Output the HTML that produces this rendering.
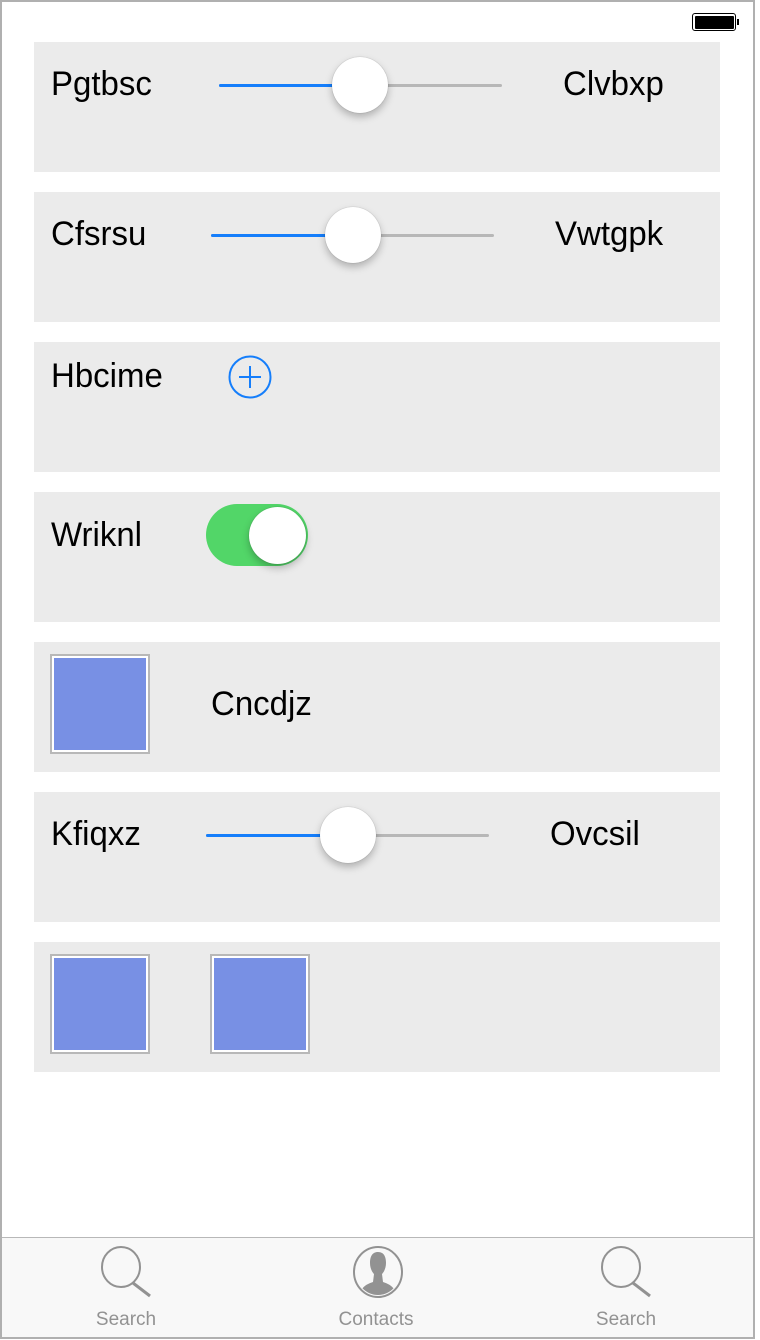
<!DOCTYPE html>
<html><head><meta charset="utf-8"><style>
*{margin:0;padding:0;box-sizing:border-box}
html,body{width:760px;height:1340px;overflow:hidden;background:#fff;font-family:"Liberation Sans",sans-serif}
#frame{position:absolute;left:0;top:0;width:755px;height:1339px;border:2px solid #b0b0b0;background:#fff}
.row{position:absolute;left:34px;width:686px;height:130px;background:#ebebeb}
.t{position:absolute;font-size:34px;color:#000;line-height:36px;transform:scaleX(0.97);transform-origin:left}
.track{position:absolute;height:3px;border-radius:2px;background:#b7b7b7}
.fill{position:absolute;height:3px;border-radius:2px;background:#157efb}
.thumb{position:absolute;width:56px;height:56px;border-radius:50%;background:#fff;box-shadow:0 4px 8px rgba(0,0,0,.25),0 0 1px rgba(0,0,0,.3)}
.img{position:absolute;width:100px;height:100px;border:2px solid #b8b8b8;background:#fff;padding:2px}
.img div{width:100%;height:100%;background:#7890e4}
#tab{position:absolute;left:2px;top:1237px;width:751px;height:100px;background:#f8f8f8;border-top:1px solid #b8b8b8}
.lbl{position:absolute;top:1309px;font-size:19px;color:#929292;width:120px;text-align:center}
</style></head><body>
<div id="frame"></div>
<div style="position:absolute;left:692px;top:13px;width:44px;height:18px;border:1.5px solid #000;border-radius:3px;padding:1.5px"><div style="width:100%;height:100%;background:#000;border-radius:1px"></div></div>
<div style="position:absolute;left:737px;top:19px;width:2px;height:6px;background:#000"></div>

<div class="row" style="top:42px"></div>
<div class="t" style="left:51px;top:66px">Pgtbsc</div>
<div class="track" style="left:219px;width:283px;top:84px"></div>
<div class="fill" style="left:219px;width:141px;top:84px"></div>
<div class="thumb" style="left:332px;top:57px"></div>
<div class="t" style="left:563px;top:66px">Clvbxp</div>

<div class="row" style="top:192px"></div>
<div class="t" style="left:51px;top:216px">Cfsrsu</div>
<div class="track" style="left:211px;width:283px;top:234px"></div>
<div class="fill" style="left:211px;width:142px;top:234px"></div>
<div class="thumb" style="left:325px;top:207px"></div>
<div class="t" style="left:555px;top:216px">Vwtgpk</div>

<div class="row" style="top:342px"></div>
<div class="t" style="left:51px;top:358px">Hbcime</div>
<svg style="position:absolute;left:227px;top:354px" width="46" height="46" viewBox="0 0 46 46"><circle cx="23" cy="23" r="20.5" fill="none" stroke="#157efb" stroke-width="2"/><path d="M12 23H34M23 12V34" stroke="#157efb" stroke-width="2"/></svg>

<div class="row" style="top:492px"></div>
<div class="t" style="left:51px;top:517px">Wriknl</div>
<div style="position:absolute;left:206px;top:504px;width:102px;height:62px;border-radius:31px;background:#52d668"></div>
<div class="thumb" style="left:249px;top:507px;width:57px;height:57px"></div>

<div class="row" style="top:642px"></div>
<div class="img" style="left:50px;top:654px"><div></div></div>
<div class="t" style="left:211px;top:686px">Cncdjz</div>

<div class="row" style="top:792px"></div>
<div class="t" style="left:51px;top:816px">Kfiqxz</div>
<div class="track" style="left:206px;width:283px;top:834px"></div>
<div class="fill" style="left:206px;width:142px;top:834px"></div>
<div class="thumb" style="left:320px;top:807px"></div>
<div class="t" style="left:550px;top:816px">Ovcsil</div>

<div class="row" style="top:942px"></div>
<div class="img" style="left:50px;top:954px"><div></div></div>
<div class="img" style="left:210px;top:954px"><div></div></div>

<div id="tab"></div>
<svg style="position:absolute;left:0;top:1237px" width="760" height="70" viewBox="0 1237 760 70">
<ellipse cx="121" cy="1267" rx="19" ry="20" fill="none" stroke="#929292" stroke-width="2"/>
<path d="M133 1283L150 1296" stroke="#929292" stroke-width="3"/>
<ellipse cx="621" cy="1267" rx="19" ry="20" fill="none" stroke="#929292" stroke-width="2"/>
<path d="M633 1283L650 1296" stroke="#929292" stroke-width="3"/>
<ellipse cx="378" cy="1272" rx="24" ry="25" fill="none" stroke="#929292" stroke-width="2"/>
<clipPath id="c"><ellipse cx="378" cy="1272" rx="22" ry="23"/></clipPath>
<path clip-path="url(#c)" d="M378 1252c-6 0-8 5-8 11 0 5 2 9 4 11l-1 8c-6 2-13 5-14 16 6 5 12 7 19 7s13-2 19-7c-1-11-8-14-14-16l-1-8c2-2 4-6 4-11 0-6-2-11-8-11z" fill="#929292"/>
</svg>
<div class="lbl" style="left:66px">Search</div>
<div class="lbl" style="left:316px">Contacts</div>
<div class="lbl" style="left:566px">Search</div>
</body></html>
